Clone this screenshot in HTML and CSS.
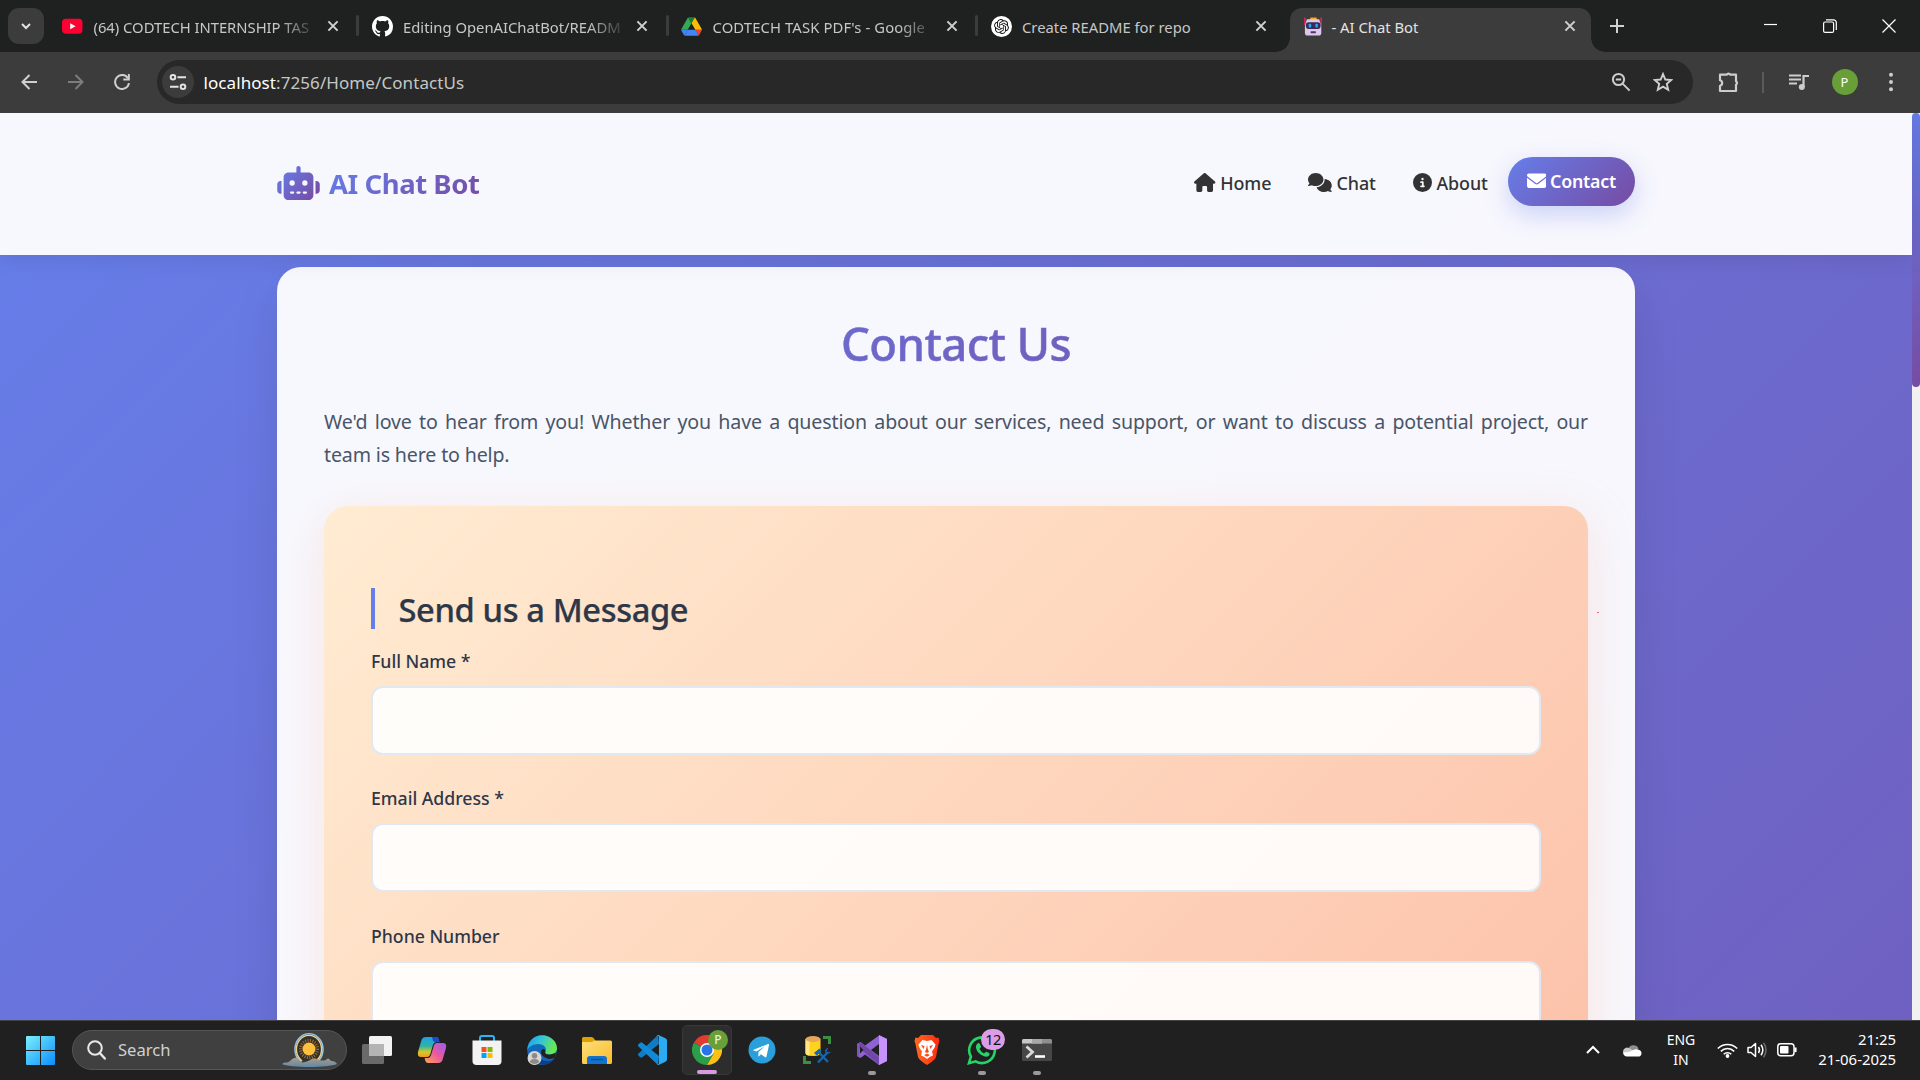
FILE: index.html
```
<!DOCTYPE html>
<html lang="en">
<head>
<meta charset="utf-8">
<title>- AI Chat Bot</title>
<link rel="stylesheet" href="styles.css">
</head>
<body>
<div class="browser">
  <div class="tabstrip">
    <div class="tab-search"><svg width="12" height="12" viewBox="0 0 12 12"><path d="M2 4l4 4 4-4" fill="none" stroke="#e3e3e3" stroke-width="2"/></svg></div>
    <div class="tab">
      <svg class="fav" viewBox="0 0 22 22"><rect x="0" y="3" width="21.5" height="15.5" rx="4" fill="#ff0033"/><path d="M8.6 7.5v6.4l5.6-3.2z" fill="#fff"/></svg>
      <span class="tab-title fade t1">(64) CODTECH INTERNSHIP TAS</span>
      <svg class="x" viewBox="0 0 12 12"><path d="M1.4 1.4l9.2 9.2M10.6 1.4l-9.2 9.2"/></svg><i class="sep"></i>
    </div>
    <div class="tab">
      <svg class="fav" viewBox="0 0 16 16"><path fill="#fff" d="M8 0C3.58 0 0 3.58 0 8c0 3.54 2.29 6.53 5.47 7.59.4.07.55-.17.55-.38 0-.19-.01-.82-.01-1.49-2.01.37-2.53-.49-2.69-.94-.09-.23-.48-.94-.82-1.13-.28-.15-.68-.52-.01-.53.63-.01 1.08.58 1.23.82.72 1.21 1.87.87 2.33.66.07-.52.28-.87.51-1.07-1.78-.2-3.64-.89-3.64-3.95 0-.87.31-1.59.82-2.15-.08-.2-.36-1.02.08-2.12 0 0 .67-.21 2.2.82.64-.18 1.32-.27 2-.27s1.36.09 2 .27c1.53-1.04 2.2-.82 2.2-.82.44 1.1.16 1.92.08 2.12.51.56.82 1.27.82 2.15 0 3.07-1.87 3.75-3.65 3.95.29.25.54.73.54 1.48 0 1.07-.01 1.93-.01 2.2 0 .21.15.46.55.38A8.01 8.01 0 0016 8c0-4.42-3.58-8-8-8z"/></svg>
      <span class="tab-title fade">Editing OpenAIChatBot/READM</span>
      <svg class="x" viewBox="0 0 12 12"><path d="M1.4 1.4l9.2 9.2M10.6 1.4l-9.2 9.2"/></svg><i class="sep"></i>
    </div>
    <div class="tab">
      <svg class="fav" viewBox="-1 -5 89 88"><path d="M6.6 66.85l3.85 6.65c.8 1.4 1.95 2.5 3.3 3.3l13.75-23.8h-27.5c0 1.55.4 3.1 1.2 4.5z" fill="#4285f4"/><path d="M43.65 25l-13.75-23.8c-1.35.8-2.5 1.9-3.3 3.3l-25.4 44a9.06 9.06 0 0 0-1.2 4.5h27.5z" fill="#34a853"/><path d="M73.55 76.8c1.35-.8 2.5-1.9 3.3-3.3l1.6-2.75 7.65-13.25c.8-1.4 1.2-2.95 1.2-4.5h-27.5l5.85 11.5z" fill="#ea4335"/><path d="M43.65 25l13.75-23.8c-1.35-.8-2.9-1.2-4.5-1.2h-18.5c-1.6 0-3.15.45-4.5 1.2z" fill="#188038"/><path d="M59.8 53h-32.3l-13.75 23.8c1.35.8 2.9 1.2 4.5 1.2h50.8c1.6 0 3.15-.45 4.5-1.2z" fill="#4285f4"/><path d="M73.4 26.5l-12.7-22c-.8-1.4-1.95-2.5-3.3-3.3l-13.75 23.8 16.15 28h27.45c0-1.55-.4-3.1-1.2-4.5z" fill="#fbbc04"/></svg>
      <span class="tab-title fade t3">CODTECH TASK PDF's - Google</span>
      <svg class="x" viewBox="0 0 12 12"><path d="M1.4 1.4l9.2 9.2M10.6 1.4l-9.2 9.2"/></svg><i class="sep"></i>
    </div>
    <div class="tab">
      <svg class="fav" viewBox="-5 -5 34 34"><circle cx="12" cy="12" r="17" fill="#fff"/><path fill="#111" d="M22.2819 9.8211a5.9847 5.9847 0 0 0-.5157-4.9108 6.0462 6.0462 0 0 0-6.5098-2.9A6.0651 6.0651 0 0 0 4.9807 4.1818a5.9847 5.9847 0 0 0-3.9977 2.9 6.0462 6.0462 0 0 0 .7427 7.0966 5.98 5.98 0 0 0 .511 4.9107 6.051 6.051 0 0 0 6.5146 2.9001A5.9847 5.9847 0 0 0 13.2599 24a6.0557 6.0557 0 0 0 5.7718-4.2058 5.9894 5.9894 0 0 0 3.9977-2.9001 6.0557 6.0557 0 0 0-.7475-7.0729zm-9.022 12.6081a4.4755 4.4755 0 0 1-2.8764-1.0408l.1419-.0804 4.7783-2.7582a.7948.7948 0 0 0 .3927-.6813v-6.7369l2.02 1.1686a.071.071 0 0 1 .038.052v5.5826a4.504 4.504 0 0 1-4.4945 4.4944zm-9.6607-4.1254a4.4708 4.4708 0 0 1-.5346-3.0137l.142.0852 4.783 2.7582a.7712.7712 0 0 0 .7806 0l5.8428-3.3685v2.3324a.0804.0804 0 0 1-.0332.0615L9.74 19.9502a4.4992 4.4992 0 0 1-6.1408-1.6464zM2.3408 7.8956a4.485 4.485 0 0 1 2.3655-1.9728V11.6a.7664.7664 0 0 0 .3879.6765l5.8144 3.3543-2.0201 1.1685a.0757.0757 0 0 1-.071 0l-4.8303-2.7865A4.504 4.504 0 0 1 2.3408 7.872zm16.5963 3.8558L13.1038 8.364 15.1192 7.2a.0757.0757 0 0 1 .071 0l4.8303 2.7913a4.4944 4.4944 0 0 1-.6765 8.1042v-5.6772a.79.79 0 0 0-.407-.667zm2.0107-3.0231l-.142-.0852-4.7735-2.7818a.7759.7759 0 0 0-.7854 0L9.409 9.2297V6.8974a.0662.0662 0 0 1 .0284-.0615l4.8303-2.7866a4.4992 4.4992 0 0 1 6.6802 4.66zM8.3065 12.863l-2.02-1.1638a.0804.0804 0 0 1-.038-.0567V6.0742a4.4992 4.4992 0 0 1 7.3757-3.4537l-.142.0805L8.704 5.459a.7948.7948 0 0 0-.3927.6813zm1.0976-2.3654l2.602-1.4998 2.6069 1.4998v2.9994l-2.5974 1.4997-2.6067-1.4997Z"/></svg>
      <span class="tab-title">Create README for repo</span>
      <svg class="x" viewBox="0 0 12 12"><path d="M1.4 1.4l9.2 9.2M10.6 1.4l-9.2 9.2"/></svg>
    </div>
    <div class="tab active">
      <svg class="fav" viewBox="0 0 21 21"><path d="M2 1v8M19 1v8" stroke="#e0245e" stroke-width="1.6"/><rect x="7.5" y="1" width="7" height="4" rx="1" fill="#f5a623"/><path d="M4 2.8h13l2.2 7v7.2a3 3 0 0 1-3 3H5a3 3 0 0 1-3-3V10z" fill="#dcc8ee"/><rect x="3" y="6" width="15.5" height="7" rx="3" fill="#3b2b56"/><rect x="6" y="7.5" width="2.6" height="4" rx=".8" fill="#29a9f5"/><rect x="13" y="7.5" width="2.6" height="4" rx=".8" fill="#29a9f5"/><rect x="8" y="15.5" width="5.5" height="2.2" rx=".6" fill="#4a3766"/></svg>
      <span class="tab-title">- AI Chat Bot</span>
      <svg class="x" viewBox="0 0 12 12"><path d="M1.4 1.4l9.2 9.2M10.6 1.4l-9.2 9.2"/></svg>
    </div>
    <svg class="plus" viewBox="0 0 14 14"><path d="M7 0v14M0 7h14" stroke="#d0d0d0" stroke-width="2"/></svg>
    <div class="win">
      <svg width="14" height="14" viewBox="0 0 14 14"><path d="M0 5.5h13" stroke="#fff" stroke-width="1.2"/></svg>
      <svg width="14" height="14" viewBox="0 0 14 14"><g fill="none" stroke="#fff" stroke-width="1.2"><rect x=".6" y="3" width="10" height="10.4" rx="1.5"/><path d="M3 .8h7.5a2.8 2.8 0 0 1 2.8 2.8V11"/></g></svg>
      <svg width="14" height="14" viewBox="0 0 14 14"><path d="M.5.5l13 13M13.5.5l-13 13" stroke="#fff" stroke-width="1.2"/></svg>
    </div>
  </div>

  <div class="toolbar">
    <svg class="nav-ic" viewBox="0 0 16 16"><path d="M16 8H1.5M8.5 1L1.5 8l7 7" fill="none" stroke="#d0d0d0" stroke-width="2"/></svg>
    <svg class="nav-ic" viewBox="0 0 16 16"><path d="M0 8h14.5M7.5 1l7 7-7 7" fill="none" stroke="#7d7d7d" stroke-width="2"/></svg>
    <svg class="nav-ic" viewBox="0 0 16 16"><path d="M14 4.2A7 7 0 1 0 15 9.2" fill="none" stroke="#d0d0d0" stroke-width="2"/><path d="M15.8 0v6.5H9.3V4.6h4.6V0z" fill="#d0d0d0"/></svg>
    <div class="omnibox">
      <div class="site"><svg width="18" height="18" viewBox="0 0 18 18" fill="none" stroke="#e3e3e3" stroke-width="2"><circle cx="4" cy="4.3" r="2.3"/><path d="M8.5 4.3H17M1 13.7h8.5"/><circle cx="14" cy="13.7" r="2.3"/></svg></div>
      <div class="url"><b>localhost</b>:7256/Home/ContactUs</div>
      <svg class="o1" width="20" height="20" viewBox="0 0 20 20" fill="none" stroke="#cdcdcd" stroke-width="2"><circle cx="7.5" cy="7.5" r="5.6"/><path d="M11.6 11.6l7 7M4.8 7.5h5.4"/></svg>
      <svg width="20" height="20" viewBox="0 0 20 20"><path d="M10 2l2.300 5.500 6 .5-4.500 3.900 1.400 5.900L10 14.700l-5.200 3.100 1.400-5.900L1.700 8l6-.5z" fill="none" stroke="#d0d0d0" stroke-width="1.9"/></svg>
    </div>
    <svg class="ext" width="22" height="22" viewBox="0 0 22 22"><path d="M2 3.700h6.700a2 2 0 0 1 3.600 0H18v6.600a2 2 0 0 1 0 3.400V20H2v-5.200a2.900 2.900 0 0 0 0-5.600z" fill="none" stroke="#cdcdcd" stroke-width="2.2" stroke-linejoin="round"/></svg>
    <i class="tsep"></i>
    <svg width="20" height="18" viewBox="0 0 20 18"><path d="M0 2.5h12M0 6.5h12M0 10.5h8" stroke="#cdcdcd" stroke-width="2"/><path d="M14.5 2v12M14 3h6" stroke="#cdcdcd" stroke-width="2.2"/><circle cx="12.8" cy="14" r="3" fill="#cdcdcd"/></svg>
    <div class="avatar">P</div>
    <svg width="4" height="20" viewBox="0 0 4 20" fill="#cdcdcd"><circle cx="2" cy="2.7" r="2"/><circle cx="2" cy="10" r="2"/><circle cx="2" cy="17.3" r="2"/></svg>
  </div>

  <div class="viewport">
    <div class="page">
      <header class="site-header">
        <div class="brand">
          <svg width="43" height="34" viewBox="0 0 640 512"><defs><linearGradient id="bg" gradientUnits="userSpaceOnUse" x1="60" y1="0" x2="580" y2="512"><stop offset="0" stop-color="#667eea"/><stop offset="1" stop-color="#764ba2"/></linearGradient></defs><path fill="url(#bg)" d="M320 0c17.7 0 32 14.3 32 32V96H472c39.8 0 72 32.2 72 72V440c0 39.8-32.2 72-72 72H168c-39.8 0-72-32.2-72-72V168c0-39.8 32.2-72 72-72H288V32c0-17.7 14.3-32 32-32zM208 384c-8.8 0-16 7.2-16 16s7.2 16 16 16h32c8.8 0 16-7.2 16-16s-7.2-16-16-16H208zm96 0c-8.8 0-16 7.2-16 16s7.2 16 16 16h32c8.8 0 16-7.2 16-16s-7.2-16-16-16H304zm96 0c-8.8 0-16 7.2-16 16s7.2 16 16 16h32c8.8 0 16-7.2 16-16s-7.2-16-16-16H400zM264 256a40 40 0 1 0 -80 0 40 40 0 1 0 80 0zm152 40a40 40 0 1 0 0-80 40 40 0 1 0 0 80zM48 224H64V416H48c-26.5 0-48-21.5-48-48V272c0-26.5 21.5-48 48-48zm544 0c26.5 0 48 21.5 48 48v96c0 26.5-21.5 48-48 48H576V224h16z"/></svg>
          <span>AI Chat Bot</span>
        </div>
        <nav class="menu">
          <a><svg width="21.4" height="19" viewBox="0 0 576 512"><path d="M575.8 255.5c0 18-15 32.1-32 32.1h-32l.7 160.2c0 2.7-.2 5.4-.5 8.1V472c0 22.1-17.9 40-40 40H392c-22.1 0-40-17.9-40-40V384c0-17.7-14.3-32-32-32H256c-17.7 0-32 14.3-32 32v88c0 22.1-17.9 40-40 40H104c-22.1 0-40-17.9-40-40V287.6H32c-18 0-32-14-32-32.1c0-9 3-17 10-24L266.4 8c7-7 15-8 22-8s15 2 21 7L564.8 231.5c8 7 12 15 11 24z"/></svg><span class="w1">Home</span></a>
          <a><svg width="23.8" height="19" viewBox="0 0 640 512"><path d="M208 352c114.9 0 208-78.8 208-176S322.9 0 208 0S0 78.8 0 176c0 38.6 14.7 74.3 39.6 103.4c-3.5 9.4-8.7 17.7-14.2 24.7c-4.8 6.2-9.7 11-13.3 14.3c-1.8 1.6-3.3 2.9-4.3 3.7c-.5 .4-.9 .7-1.1 .8l-.2 .2C1 327.2-1.4 334.4 .8 340.9S9.1 352 16 352c21.8 0 43.8-5.6 62.1-12.5c9.2-3.5 17.8-7.4 25.2-11.4C134.1 343.3 169.8 352 208 352zM448 176c0 112.3-99.1 196.9-216.5 207C255.8 457.4 336.4 512 432 512c38.2 0 73.9-8.7 104.7-23.9c7.5 4 16 7.9 25.2 11.4c18.3 6.9 40.3 12.5 62.1 12.5c6.9 0 13.1-4.5 15.2-11.1c2.1-6.6-.2-13.8-5.8-17.9l-.2-.2c-.2-.2-.6-.4-1.1-.8c-1-.8-2.5-2-4.3-3.7c-3.6-3.3-8.5-8.1-13.3-14.3c-5.5-7-10.7-15.4-14.2-24.7c24.9-29 39.6-64.7 39.6-103.4c0-92.8-84.9-168.9-192.6-175.5c.4 5.1 .6 10.3 .6 15.5z"/></svg><span class="w2">Chat</span></a>
          <a><svg width="19" height="19" viewBox="0 0 512 512"><path d="M256 512A256 256 0 1 0 256 0a256 256 0 1 0 0 512zM216 336h24V272H216c-13.3 0-24-10.7-24-24s10.7-24 24-24h48c13.3 0 24 10.7 24 24v88h8c13.3 0 24 10.7 24 24s-10.7 24-24 24H216c-13.3 0-24-10.7-24-24s10.7-24 24-24zm40-208a32 32 0 1 1 0 64 32 32 0 1 1 0-64z"/></svg><span class="w3">About</span></a>
          <a class="on"><svg width="19.5" height="19.5" viewBox="0 0 512 512"><path d="M48 64C21.5 64 0 85.5 0 112c0 15.1 7.1 29.3 19.2 38.4L236.8 313.6c11.4 8.5 27 8.5 38.4 0L492.8 150.4c12.1-9.1 19.2-23.3 19.2-38.4c0-26.5-21.5-48-48-48H48zM0 176V384c0 35.3 28.7 64 64 64H448c35.3 0 64-28.7 64-64V176L294.4 339.2c-22.8 17.1-54 17.1-76.8 0L0 176z"/></svg><span class="w4">Contact</span></a>
        </nav>
      </header>
      <main class="card">
        <h1>Contact Us</h1>
        <p class="lead">We'd love to hear from you! Whether you have a question about our services, need support, or want to discuss a potential project, our <span>team is here</span> to help.</p>
        <form class="form">
          <i class="speck"></i>
          <h2>Send us a Message</h2>
          <label class="field"><span>Full Name *</span><input type="text"></label>
          <label class="field"><span>Email Address *</span><input type="text"></label>
          <label class="field"><span>Phone Number</span><input type="text"></label>
        </form>
      </main>
    </div>
    <div class="scroll"><div class="thumb"></div></div>
  </div>
</div>

<div class="taskbar">
  <svg class="start" width="29" height="29" viewBox="0 0 29 29"><defs><linearGradient id="w" x1="0" y1="0" x2="1" y2="1"><stop offset="0" stop-color="#7af0ff"/><stop offset="1" stop-color="#0a8dfa"/></linearGradient></defs><path fill="url(#w)" d="M1 0h13v14H0V1a1 1 0 0 1 1-1zM15 0h13a1 1 0 0 1 1 1v13H15zM0 15h14v14H1a1 1 0 0 1-1-1zM15 15h14v13a1 1 0 0 1-1 1H15z"/></svg>
  <div class="search">
    <svg width="19" height="20" viewBox="0 0 19 20"><circle cx="8" cy="8" r="6.8" fill="none" stroke="#e8e8e8" stroke-width="2"/><path d="M12.8 13l5 5.5" stroke="#e8e8e8" stroke-width="2.4" stroke-linecap="round"/></svg>
    <span>Search</span>
    <svg width="56" height="34" viewBox="0 0 56 34"><defs><linearGradient id="cl" x1="0" y1="0" x2="0" y2="1"><stop offset="0" stop-color="#b09a85"/><stop offset="1" stop-color="#5d8aa8"/></linearGradient></defs><path d="M19 29A14 15.5 0 1 1 35 29" fill="none" stroke="#8ec3dd" stroke-width="1.6"/><path d="M20 28A12.6 14 0 1 1 34 28" fill="#33312d" stroke="#f2cf8a" stroke-width="1.4"/><circle cx="27" cy="16" r="8.5" fill="none" stroke="#a8752a" stroke-width="3" stroke-dasharray=".9 1.5"/><circle cx="27" cy="16" r="6.5" fill="#ffbf3f"/><path d="M0 31c3-3 5 0 8-3s6-5 9-1 6 2 9 1 5-4 9-2 8 2 10 0 3 2 5 2 4 1 5 3c-8 4-48 4-55 0z" fill="url(#cl)"/></svg>
  </div>
  <div class="apps">
    <div class="app"><svg viewBox="0 0 30 30"><rect x="7" y="1" width="23" height="20" rx="1.5" fill="#f2f2f2"/><rect x="0" y="9" width="22" height="20" rx="1.5" fill="#6a6a6a"/><path d="M7 9h15v12H7z" fill="#b4b4b4"/></svg></div>
    <div class="app"><svg viewBox="0 0 30 30"><defs><linearGradient id="ca" x1="0" y1="0" x2="0" y2="1"><stop offset="0" stop-color="#1f9ff0"/><stop offset=".45" stop-color="#2cb5a0"/><stop offset=".75" stop-color="#d5c82c"/><stop offset="1" stop-color="#f59b1c"/></linearGradient><linearGradient id="cb" x1="1" y1="0" x2="0" y2="1"><stop offset="0" stop-color="#9a5cf5"/><stop offset=".5" stop-color="#e85a9d"/><stop offset="1" stop-color="#ffa552"/></linearGradient></defs><path d="M9 2h10q2 0 2.6 2l.8 3h-3q-2.5 0-3.3 2.5L13 20q-.8 2-3 2H4q-4 0-3-5L4.500 5Q5.500 2 9 2z" fill="url(#ca)"/><path d="M15 2h4q2 0 2.6 2l.9 3.2h-3.6q-2 0-3-2z" fill="#1b49d4"/><path d="M21 28H11q-2 0-2.6-2l-.8-3h3q2.5 0 3.3-2.5L17 10q.8-2 3-2h6q4 0 3 5l-3.5 12q-1 3-4.500 3z" fill="url(#cb)"/></svg></div>
    <div class="app"><svg viewBox="0 0 30 30"><path d="M8 6V3q0-2 2-2h10q2 0 2 2v3" fill="none" stroke="#29b6f0" stroke-width="2"/><path d="M.5 5.5h29V26a4 4 0 0 1-4 4h-21a4 4 0 0 1-4-4z" fill="#f3f3f3"/><path d="M9.5 12h5v5h-5z" fill="#f25022"/><path d="M15.5 12h5v5h-5z" fill="#7fba00"/><path d="M9.5 18h5v5h-5z" fill="#00a4ef"/><path d="M15.5 18h5v5h-5z" fill="#ffb900"/></svg></div>
    <div class="app"><svg viewBox="0 0 30 30"><defs><linearGradient id="ea" x1="0" y1="0" x2="1" y2=".3"><stop offset="0" stop-color="#1a9be8"/><stop offset=".5" stop-color="#35c5d6"/><stop offset="1" stop-color="#66e854"/></linearGradient></defs><circle cx="15" cy="15" r="14.8" fill="#1169bd"/><path d="M.3 15C1 5 8 .2 15 .2 24 .2 30 7 30 13c0 4-3 6.500-7 6.500-5 0-5.500-2-4.500-3.500C20 13 17 9 11.500 9 6 9 1.500 12 .3 15z" fill="url(#ea)"/><path d="M10.500 17c0 6 5 9 10 9 3 0 5-1 6.500-2-3 4.500-8 6-12 5.500C9 29 7 21 10.500 17z" fill="#0d3f86"/><path d="M18.500 16c-1 2 0 4 5 3.500l5-1.500q1 2-.5 4.500c-2 1.500-6 2-9 .5-4-2-5-4-5-6.500.5-3 3.500-3.500 4.500-.5z" fill="#202020"/><circle cx="7.5" cy="23" r="7" fill="#d8d5d2"/><circle cx="7.5" cy="20.8" r="2.8" fill="#8d8a88"/><path d="M2.8 27q.5-3 4.700-3t4.700 3q-2 2-4.700 2t-4.700-2z" fill="#8d8a88"/></svg></div>
    <div class="app"><svg viewBox="0 0 30 30"><defs><linearGradient id="fa" x1="0" y1="0" x2="1" y2="1"><stop offset="0" stop-color="#ffe07a"/><stop offset="1" stop-color="#f8bb2c"/></linearGradient></defs><path d="M0 9V3.500Q0 2 1.500 2h8q1.500 0 2.500 1.500L13.500 6v5z" fill="#e0a100"/><path d="M0 7h10l2.500-1.500H28.500q1.500 0 1.500 1.500v20.500q0 1.500-1.500 1.500h-27Q0 29 0 27.500z" fill="url(#fa)"/><path d="M5 29v-5q0-3 3-3h14q3 0 3 3v5z" fill="#1173ce"/><path d="M9 24.5h12" stroke="#0b4f93" stroke-width="1.4"/></svg></div>
    <div class="app"><svg viewBox="0 0 30 30"><path d="M21 0l-4 3.800L1.500 18.500q-1.300 1.200 0 2.300l1.800 1.500q1 .7 2 0L22 9z" fill="#0f7cc4"/><path d="M21 30l-4-3.800L1.500 11.500q-1.300-1.200 0-2.300l1.800-1.500q1-.7 2 0L22 21z" fill="#1089d8"/><path d="M21.500 0L28.500 3.300q1.500.8 1.500 2.400v18.600q0 1.600-1.500 2.400L21.500 30q-1 .2-2-.9 2.500 1 2.500-1.600v-25Q22 0 19.500 1q1-1.200 2-1z" fill="#2aabf2"/></svg></div>
    <div class="app run big"><svg viewBox="0 0 30 30"><path d="M15 15L2 7.500A15 15 0 0 1 28 7.500H15z" fill="#e33b2e"/><path d="M15 15L2 7.500A15 15 0 0 0 15 30L21.500 18.700z" fill="#2b9e49"/><path d="M15 7.500H28A15 15 0 0 1 15 30l6.500-11.300z" fill="#fbc116"/><circle cx="15" cy="15" r="7" fill="#fff"/><circle cx="15" cy="15" r="5.5" fill="#2a74e8"/></svg><b class="badge green">P</b></div>
    <div class="app"><svg viewBox="0 0 30 30"><circle cx="15" cy="15" r="13.5" fill="#2a9fdb"/><path d="M6 15l15-6q1.200-.4 1 1l-2.500 11.500q-.4 1.400-1.700.6L14 19.300l-2 2q-.6.400-.7-.5l.2-3.800L18 11l-8.500 5.400L6 15.300z" fill="#fff"/></svg></div>
    <div class="app"><svg viewBox="0 0 30 30"><path d="M3.500 4v14q0 3 7.500 3t7.500-3V4z" fill="#ffd21e"/><path d="M3.500 4v14q0 2 4 2.700V5z" fill="#ffe682"/><ellipse cx="11" cy="4" rx="7.5" ry="3" fill="#e8a55c"/><path d="M21 2.500h6.500V9M2.500 21v6.500H9" fill="none" stroke="#3c8f40" stroke-width="3"/><path d="M16 16.500l10 10.500M26 17L16 27.500" stroke="#0f68b0" stroke-width="2.4"/><path d="M12.500 18l5-4 1.500 2-4 4zM24 18l-.5-3 2.500-2M28.500 17l-3 1.500" fill="#0f68b0" stroke="#0f68b0"/></svg></div>
    <div class="app run"><svg viewBox="0 0 30 30"><path d="M0 9l3.500-2L8 10.500l14-10L30 4v22l-8 4L8 19.500 3.500 23 0 21z" fill="#8e63d6"/><path d="M0 9l3.500-2L22 22v8L0 11z" fill="#7148a8"/><path d="M22 0l8 4v22l-8 4z" fill="#c793fa"/><path d="M3 11.500v7L6.500 15zM22 9v12l-8-6z" fill="#202020"/><path d="M0 9l2.500-1.300v15L0 21z" fill="#7c56bd"/></svg></div>
    <div class="app"><svg viewBox="0 0 30 30"><defs><linearGradient id="br" x1="0" x2="1" y1="0" y2="0"><stop offset="0" stop-color="#ff6a1f"/><stop offset="1" stop-color="#ff2a12"/></linearGradient></defs><path d="M9 0h12l3 3 2.500-.5L27.500 6l-1 3-2.500 13Q23 25 15 30 7 25 6 22L3.500 9l-1-3 1-3.500L6 3z" fill="url(#br)"/><path d="M10.500 5l4.500 1 4.500-1 4 4.500-.8 3-2.700 4 1 4-3 1.200L15 24l-3-2.300-3-1.200 1-4-2.700-4-.8-3z" fill="#fff"/><path d="M9 10l3.500 1-1 3zM21 10l-3.500 1 1 3zM15 9.500l.8 4.500 1.200 3-2 1-2-1 1.200-3zM12 20l3-1.300 3 1.300-3 1.700z" fill="#fb4a1a"/></svg></div>
    <div class="app run"><svg viewBox="0 0 30 30"><path d="M2 28.200l1.900-6.600A12.800 12.800 0 1 1 8.600 26.300z" fill="none" stroke="#25d366" stroke-width="2.6"/><path d="M10.500 8.500q1.500-1.200 2.300.3l1.200 2.700q.3.800-1.500 2.500 1.500 3 4.600 4.400 1.600-2 2.300-1.700l2.700 1.300q1.400.8-.2 2.700-1.700 1.700-5 .6-6.500-2.500-8-8.500-.2-3 1.600-4.300z" fill="#25d366"/></svg><b class="badge pink">12</b></div>
    <div class="app run"><svg viewBox="0 0 30 30"><rect x="0" y="4" width="30" height="22" rx="1.5" fill="#474747"/><path d="M0 8.500V5.500Q0 4 1.500 4H20v4.500z" fill="#c8c8c8"/><path d="M20 4h8.500Q30 4 30 5.500v3H20z" fill="#8f8f8f"/><path d="M10 4h10v4.500H10z" fill="#a8a8a8"/><path d="M4.500 11.500l6 5.500-6 5.500" fill="none" stroke="#d9d9d9" stroke-width="2.8"/><path d="M13 21.500h10" stroke="#fff" stroke-width="2.6"/></svg></div>
  </div>
  <div class="tray">
    <svg width="14" height="9" viewBox="0 0 14 9"><path d="M1 8l6-6 6 6" fill="none" stroke="#fff" stroke-width="2"/></svg>
    <svg class="cloud" width="20" height="14" viewBox="0 0 20 14"><path d="M5 7a5.500 5.500 0 0 1 10.500-1.500L12 9z" fill="#8e8e8e"/><path d="M1 11a4 4 0 0 1 5-6l9 5z" fill="#c9c9c9"/><path d="M3.500 13.500a3.400 3.400 0 0 1-3-4.500q5 1 9-1.500 3-2 7-.5a3.600 3.600 0 0 1 0 6.500z" fill="#fff"/></svg>
    <div class="lang">ENG<br>IN</div>
    <svg class="wifi" width="21" height="16" viewBox="0 0 21 16"><g fill="none" stroke="#fff" stroke-width="1.5"><path d="M.8 6.500a13.500 13.500 0 0 1 19.400 0M3.800 9.400a9.400 9.400 0 0 1 13.400 0M6.700 12.200a5.400 5.400 0 0 1 7.600 0"/></g><circle cx="10.5" cy="14" r="1.9" fill="#fff"/></svg>
    <svg class="vol" width="21" height="16" viewBox="0 0 21 16"><path d="M1 5.500h3L8.500 1.500v13L4 10.500H1z" fill="none" stroke="#fff" stroke-width="1.5" stroke-linejoin="round"/><path d="M11.500 5q2 3 0 6M14 2.800q3.700 5.200 0 10.400" fill="none" stroke="#fff" stroke-width="1.5"/><path d="M16.500.8q5 7.200 0 14.400" fill="none" stroke="#6a6a6a" stroke-width="1.5"/></svg>
    <svg class="bat" width="20" height="14" viewBox="0 0 20 14"><rect x=".8" y=".8" width="16.2" height="12" rx="3" fill="none" stroke="#fff" stroke-width="1.5"/><rect x="3" y="3" width="8.5" height="7.6" rx="1" fill="#fff"/><path d="M18.5 4.500v4.600" stroke="#fff" stroke-width="2.2"/></svg>
    <div class="clock">21:25<br>21-06-2025</div>
  </div>
</div>
</body>
</html>
```
FILE: styles.css
```
* { box-sizing: border-box; }
body {
  margin: 0; width: 1920px; height: 1080px; overflow: hidden;
  display: flex; flex-direction: column; background: #202020;
  font-family: "Noto Sans", "Open Sans", sans-serif;
}
svg { display: block; flex: none; }
.browser { height: 1020px; display: flex; flex-direction: column; }

/* tab strip */
.tabstrip { height: 52px; background: #1f2120; display: flex; }
.tab-search {
  width: 36px; height: 36px; margin: 8px 8px 0; border-radius: 11px; background: #3c3c3c;
  display: grid; place-items: center;
}
.tab {
  width: 309.5px; height: 52px; padding: 8px 0 8px 10px;
  display: flex; align-items: center; position: relative; color: #c7c7c7;
}
.fav { width: 21px; height: 21px; }
.tab-title {
  width: 219px; margin-left: 10.5px; white-space: nowrap;
  font-size: 14.8px; line-height: 24px; padding-top: 1px;
}
.tab-title.t1 { letter-spacing: -.02px; }
.tab-title.t3 { letter-spacing: .12px; }
.tab-title.fade {
  -webkit-mask-image: linear-gradient(90deg, #000 185px, transparent 225px);
  mask-image: linear-gradient(90deg, #000 185px, transparent 225px);
}
.x { width: 12px; height: 12px; margin-left: 14px; }
.x path { stroke: #d0d0d0; stroke-width: 2; fill: none; }
.sep { position: absolute; left: 304px; top: 15px; width: 3px; height: 21px; border-radius: 2px; background: #3c3c3c; }
.tab.active {
  width: 301px; height: 44px; margin-top: 8px; padding: 0 0 8px 13px;
  background: #3c3c3c; border-radius: 12px 12px 0 0; color: #e3e3e3;
}
.tab.active .fav { width: 20px; margin-right: -2px; }
.tab.active::before, .tab.active::after {
  content: ""; position: absolute; bottom: 0; width: 14px; height: 14px;
}
.tab.active::before { left: -14px; background: radial-gradient(circle at 0 0, transparent 13.5px, #3c3c3c 14px); }
.tab.active::after { right: -14px; background: radial-gradient(circle at 100% 0, transparent 13.5px, #3c3c3c 14px); }
.tab.active .tab-title { width: 218px; }
.plus { width: 14px; height: 14px; margin: 19px 0 0 19px; }
.win { display: flex; gap: 45px; margin: 19px 24px 0 auto; }

/* toolbar */
.toolbar { height: 61px; background: #3c3c3c; display: flex; align-items: center; padding: 0 0 1px 21px; }
.nav-ic { width: 16px; height: 16px; margin-right: 30.5px; }
.omnibox {
  width: 1536px; height: 44px; margin-left: -4px; padding: 0 20px 0 5px; border-radius: 22px;
  background: #282828; display: flex; align-items: center;
}
.site { width: 32px; height: 32px; border-radius: 50%; background: #3c3c3c; display: grid; place-items: center; }
.url { margin-left: 10px; flex: 1; font-size: 17px; letter-spacing: .08px; color: #c4c7c5; }
.url b { font-weight: 400; color: #fff; }
.o1 { margin-right: 22px; }
.ext { margin-left: 25px; }
.tsep { width: 2px; height: 21px; background: #5a5a5a; margin: 0 25px 0 22px; }
.avatar {
  width: 26px; height: 26px; margin: 0 31px 0 23px; border-radius: 50%; background: #689f38;
  color: #fff; font-size: 13px; line-height: 26px; text-align: center;
}

/* web page */
.viewport { height: 907px; display: flex; overflow: hidden; }
.page { width: 1912px; height: 3003px; background: linear-gradient(135deg, #667eea, #764ba2); }
.scroll { width: 8px; background: #f1f1f1; }
.thumb { height: 274px; border-radius: 4px; background: linear-gradient(135deg, #667eea, #764ba2); }
.site-header {
  position: relative; height: 142px; padding: 0 277px; display: flex; align-items: center; justify-content: space-between;
  background: rgba(255,255,255,.95); box-shadow: 0 2px 24px rgba(0,0,0,.1);
}
.brand { display: flex; align-items: center; }
.brand svg { margin: -3px 9px 0 0; }
.brand span {
  font-size: 27.5px; line-height: 42px; font-weight: 700; letter-spacing: -.45px;
  background: linear-gradient(135deg, #667eea, #764ba2); -webkit-background-clip: text; background-clip: text; color: transparent;
}
.menu { display: flex; align-items: center; }
.menu a {
  display: flex; align-items: center; height: 50px; margin-top: -2px; padding: 0 18px 0 18.5px; gap: 4.5px;
  font-size: 17.9px; font-weight: 500; letter-spacing: -.1px; color: #333; white-space: nowrap;
}
.menu svg { fill: currentColor; margin-top: -1px; }
.menu span { width: 51.5px; }
.menu .w2 { width: 40px; }
.menu .w3 { width: 53.5px; }
.menu .w4 { width: 67px; }
.menu .on {
  width: 127px; height: 49.5px; gap: 4px; margin-top: -5px; padding-bottom: 1px; border-radius: 25px;
  color: #fff; font-size: 17.8px; font-weight: 600; letter-spacing: -.2px;
  background: linear-gradient(135deg, #667eea, #764ba2); box-shadow: 0 9px 24px rgba(102,126,234,.3);
}
.card {
  width: 1358px; height: 2600px; margin: 12px auto 0; padding: 47px; border-radius: 24px;
  background: rgba(255,255,255,.95); box-shadow: 0 24px 48px rgba(0,0,0,.1);
}
.card h1 {
  margin: 0; height: 58px; line-height: 59px; text-align: center; font-size: 45.5px; font-weight: 500; letter-spacing: -.6px;
  -webkit-text-stroke: .5px transparent;
  background: linear-gradient(135deg, #667eea, #764ba2); -webkit-background-clip: text; background-clip: text; color: transparent;
}
.lead {
  margin: 32.5px 0 34.5px; font-size: 19.6px; line-height: 33.5px; letter-spacing: -.15px;
  color: #4a5568; text-align: justify;
}
.lead span { white-space: nowrap; }
.form {
  position: relative; height: 1075px; padding: 82px 47px 0; border-radius: 24px;
  background: linear-gradient(135deg, #ffecd2, #fcb69f); box-shadow: 0 12px 48px rgba(252,182,159,.3);
}
.speck { position: absolute; left: 1273px; top: 106px; width: 2px; height: 1px; background: #f36a6a; }
.form h2 {
  margin: 0 0 18px; height: 41px; padding-left: 23.5px; border-left: 4px solid #667eea;
  font-size: 32.7px; line-height: 43px; font-weight: 500; letter-spacing: -.39px; color: #2d3748;
  -webkit-text-stroke: .25px #2d3748;
}
.field { display: block; margin-bottom: 29.4px; font-size: 17.7px; font-weight: 500; letter-spacing: -.02px; color: #2d3748; }
.field span { display: block; height: 28px; line-height: 28.4px; margin-bottom: 11px; }
.field input {
  display: block; width: 100%; height: 69px; border: 2.4px solid #e2e8f0; border-radius: 12px;
  background: rgba(255,255,255,.9);
}

/* taskbar */
.taskbar { height: 60px; background: #202020; border-top: 1px solid #444; display: flex; align-items: center; padding-bottom: 1px; }
.start { margin-left: 26px; }
.search {
  width: 275px; height: 40px; margin-left: 17px; padding: 0 8px 0 14px; border-radius: 20px;
  background: #404040; border: 1px solid #555; display: flex; align-items: center;
}
.search span { margin: -1px 0 0 12px; flex: 1; font-size: 16.6px; color: #d0d0d0; }
.apps { display: flex; margin-left: 5px; }
.app { width: 50px; height: 50px; margin-right: 5px; position: relative; display: grid; place-items: center; border-radius: 5px; }
.app svg { width: 30px; height: 30px; }
.app.big { background: #2d2d2d; border: 1px solid #383838; }
.app.run::after {
  content: ""; position: absolute; left: 21px; bottom: 0; width: 8px; height: 4px; border-radius: 2px; background: #9a9a9a;
}
.app.big::after { left: 14px; width: 20px; background: #d89ae3; }
.badge { position: absolute; border-radius: 50%; text-align: center; font-weight: 400; }
.badge.green { width: 20px; height: 20px; left: 25px; top: 4px; background: #689f38; color: #e6efdc; font-size: 12px; line-height: 20px; font-weight: 500; }
.badge.pink { width: 24px; height: 21px; border-radius: 11px; left: 24px; top: 4px; background: #dd9ce6; color: #111; font-size: 14.5px; line-height: 21px; letter-spacing: -.5px; }
.tray { display: flex; align-items: center; margin: -1px 24px 0 auto; color: #fff; font-size: 14.9px; line-height: 20px; }
.cloud { margin-left: 23px; }
.lang { width: 32px; margin: 0 0 0 22px; text-align: center; font-size: 14px; }
.wifi { margin-left: 20px; }
.vol { margin-left: 9px; }
.bat { margin-left: 9px; }
.clock { width: 80px; margin: -2px 0 0 19px; text-align: right; white-space: nowrap; }
```
